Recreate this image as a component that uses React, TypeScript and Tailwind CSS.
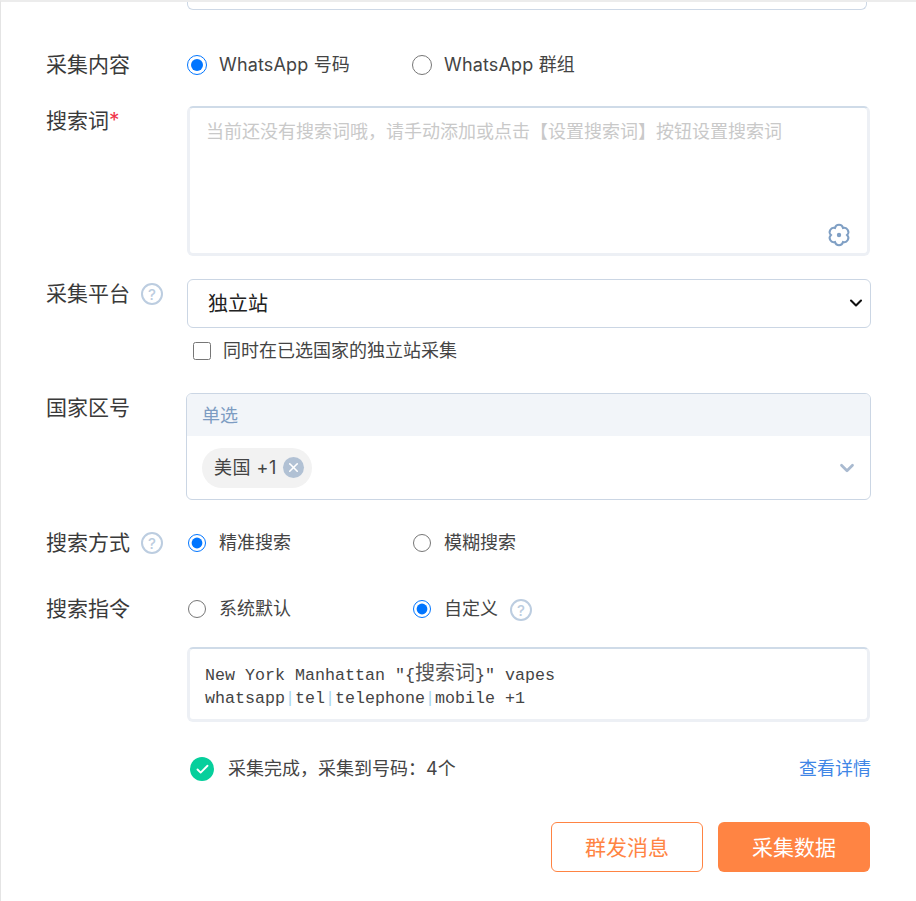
import { ChevronDown, Check, X } from 'lucide-react'
import type { ReactNode } from 'react'

const FONT = "font-['Inter','Noto_Sans_CJK_SC',sans-serif]"

function HelpIcon() {
  return (
    <span className="flex h-[22px] w-[22px] shrink-0 items-center justify-center rounded-full border-2 border-[#bccde0] text-[15px] font-medium leading-none text-[#bccde0]">
      ?
    </span>
  )
}

function GearIcon() {
  return (
    <svg width="24" height="24" viewBox="0 0 24 24" fill="none" stroke="#7f9fc4" strokeWidth="2">
      <path d="M16 5.07A4.1 4.1 0 0 1 20 12A4.1 4.1 0 0 1 16 18.93A4.1 4.1 0 0 1 8 18.93A4.1 4.1 0 0 1 4 12A4.1 4.1 0 0 1 8 5.07A4.1 4.1 0 0 1 16 5.07Z" />
      <circle cx="12" cy="12" r="2.2" fill="#7f9fc4" stroke="none" />
    </svg>
  )
}

function Row({ label, extra, children, className }: { label: ReactNode; extra?: ReactNode; children: ReactNode; className?: string }) {
  return (
    <div className={`flex ${className ?? ''}`}>
      <div className="flex w-[141px] shrink-0 items-start gap-[11px] text-[21px] leading-[30px] text-[#3a3a3a]">
        <span>{label}</span>
        {extra && <span className="mt-[4px]">{extra}</span>}
      </div>
      <div className="min-w-0 flex-1">{children}</div>
    </div>
  )
}

function Radio({ name, label, checked, width, small, extra }: { name: string; label: string; checked?: boolean; width: string; small?: boolean; extra?: ReactNode }) {
  return (
    <label className={`flex items-center text-[18px] leading-[24px] text-[#444] ${width}`}>
      <input
        type="radio"
        name={name}
        defaultChecked={checked}
        className={small ? 'm-0 ml-px mr-px h-[18px] w-[18px]' : 'm-0 h-[20px] w-[20px]'}
      />
      <span className="ml-[12px]">{label}</span>
      {extra && <span className="ml-[12px] mt-[2px]">{extra}</span>}
    </label>
  )
}

export default function App() {
  return (
    <div className={`${FONT} h-[901px] w-[916px] overflow-hidden border-l border-t-2 border-l-[#e4e4e4] border-t-[#ececec] bg-white pl-[45px] pr-[45px]`}>
      {/* tail of the field above, cut off by the scroll */}
      <div className="ml-[141px] mr-[4px] h-[8px] rounded-b-[6px] border border-t-0 border-[#cdd8e6]" />

      <Row label="采集内容" className="mt-[40px]">
        <div className="flex h-[30px] items-center">
          <Radio name="content" label="WhatsApp 号码" checked width="w-[225px] tracking-[0.16px]" />
          <Radio name="content" label="WhatsApp 群组" width="w-[225px] tracking-[0.16px]" />
        </div>
      </Row>

      <Row label={<>搜索词<span className="text-[#f0364c]">*</span></>} className="mt-[26px]">
        <div className="relative mr-px h-[150px] rounded-[6px] border-[3px] border-[#edf0f5] border-t-2 border-t-[#cfdbe8]">
          <textarea
            placeholder="当前还没有搜索词哦，请手动添加或点击【设置搜索词】按钮设置搜索词"
            className="h-full w-full resize-none bg-transparent px-[16px] py-[11px] text-[18px] leading-[26px] outline-none placeholder:text-[#c9c9c9]"
          />
          <span className="absolute bottom-[6px] right-[16px]">
            <GearIcon />
          </span>
        </div>
      </Row>

      <Row label="采集平台" extra={<HelpIcon />} className="mt-[23px]">
        <div className="relative">
          <select className="h-[49px] w-full appearance-none rounded-[6px] border border-[#cbd6e4] bg-white pl-[20px] pr-[10px] text-[20px] text-[#222] outline-none">
            <option>独立站</option>
          </select>
          <ChevronDown size={20} strokeWidth={2.5} className="absolute right-[5px] top-[14px] text-[#111]" />
        </div>
        <label className="ml-[6px] mt-[11px] flex items-center text-[18px] leading-[24px] text-[#444]">
          <input type="checkbox" className="m-0 h-[18px] w-[18px]" />
          <span className="ml-[12px]">同时在已选国家的独立站采集</span>
        </label>
      </Row>

      <Row label="国家区号" className="mt-[30px]">
        <div className="-ml-px overflow-hidden rounded-[6px] border border-[#cbd6e4]">
          <div className="flex h-[42px] items-center bg-[#f2f5f9] px-[15px] text-[18px] text-[#7d9cc2]">单选</div>
          <div className="flex h-[63px] items-center justify-between pl-[15px] pr-[12px]">
            <div className="flex h-[40px] w-[110px] items-center rounded-full bg-[#f2f2f2] pl-[12px] text-[18px] text-[#444]">
              <span className="whitespace-pre tracking-[0.5px]">美国 +1</span>
              <span className="ml-[6px] flex h-[21px] w-[21px] items-center justify-center rounded-full bg-[#b1c1d4]">
                <X size={15} strokeWidth={2.5} className="text-white" />
              </span>
            </div>
            <ChevronDown size={22} strokeWidth={3} className="text-[#a9bad0]" />
          </div>
        </div>
      </Row>

      <Row label="搜索方式" extra={<HelpIcon />} className="mt-[28px]">
        <div className="flex h-[30px] items-center">
          <Radio name="mode" label="精准搜索" checked small width="w-[225px]" />
          <Radio name="mode" label="模糊搜索" small width="w-[225px]" />
        </div>
      </Row>

      <Row label="搜索指令" className="mt-[36px]">
        <div className="flex h-[30px] items-center">
          <Radio name="cmd" label="系统默认" small width="w-[225px]" />
          <Radio name="cmd" label="自定义" checked small width="w-[225px]" extra={<HelpIcon />} />
        </div>
        <div className="mr-px mt-[23px] h-[75px] rounded-[6px] border-[3px] border-[#edf0f5] border-t-2 border-t-[#cfdbe8] pl-[15px] pt-[14px] font-['Liberation_Mono','Noto_Sans_CJK_SC',monospace] text-[16.67px] leading-[23px] text-[#444]">
          <div>
            New York Manhattan "{'{'}<span className="text-[20px] text-[#555]">搜索词</span>{'}'}" vapes
          </div>
          <div>
            whatsapp<span className="text-[#a8d8f0]">|</span>tel<span className="text-[#a8d8f0]">|</span>telephone<span className="text-[#a8d8f0]">|</span>mobile +1
          </div>
        </div>
        <div className="mt-[32px] flex items-center justify-between">
          <div className="flex items-center text-[18px] leading-[30px] text-[#444]">
            <span className="ml-[3px] flex h-[24px] w-[24px] items-center justify-center rounded-full bg-[#06cf9c]">
              <Check size={15} strokeWidth={3} className="text-white" />
            </span>
            <span className="ml-[14px]">采集完成，采集到号码：4个</span>
          </div>
          <a className="text-[18px] leading-[30px] text-[#3f86e6]">查看详情</a>
        </div>
      </Row>

      <div className="mr-px mt-[38px] flex justify-end gap-[15px] text-[21px]">
        <button className="h-[50px] w-[152px] rounded-[6px] border border-[#ff8443] bg-white pt-[2px] text-[#ff8443]">群发消息</button>
        <button className="h-[50px] w-[152px] rounded-[6px] bg-[#ff8443] pt-[2px] text-white">采集数据</button>
      </div>
    </div>
  )
}
